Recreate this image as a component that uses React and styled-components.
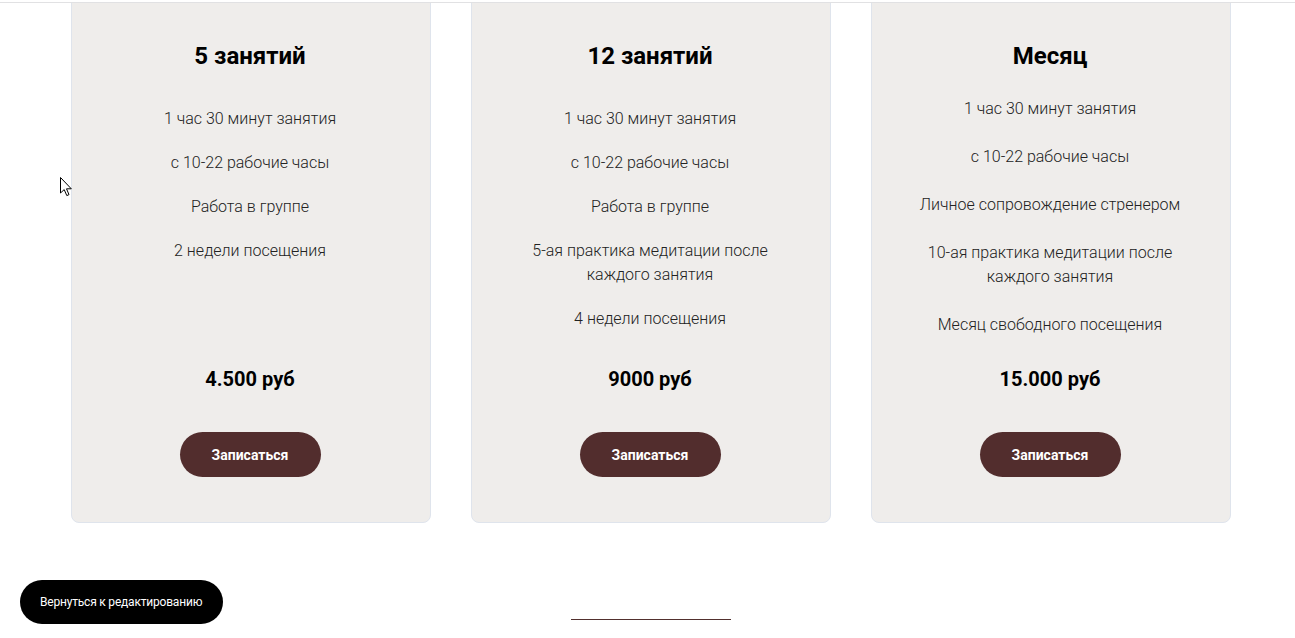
import styled, { createGlobalStyle } from 'styled-components'

const GlobalStyle = createGlobalStyle`
	html, body {
		margin: 0;
		padding: 0;
		background: #ffffff;
		overflow: hidden;
	}
	body {
		font-family: Roboto, "Noto Sans", Arial, sans-serif;
		color: #000;
	}
	* {
		box-sizing: border-box;
	}
`

const TopBar = styled.div`
	position: fixed;
	top: 0;
	left: 0;
	right: 0;
	height: 3px;
	background: #fff;
	border-bottom: 1px solid #e1e1e3;
	z-index: 5;
`

const Page = styled.div`
	padding: 0 64px 0 71px;
	display: flex;
	flex-direction: column;
	align-items: center;
`

const Cards = styled.div`
	margin-top: -20px;
	display: grid;
	grid-template-columns: repeat(3, 360px);
	gap: 40px;
`

const Card = styled.div`
	background: #efedeb;
	border: 1px solid #dfe4ec;
	border-radius: 8px;
	padding: 59px 21px 45px 19px;
	display: flex;
	flex-direction: column;
	align-items: center;
	text-align: center;
`

const Title = styled.h3`
	margin: 0;
	font-size: 24px;
	line-height: 32px;
	font-weight: 700;
	color: #000;
`

const List = styled.ul`
	list-style: none;
	margin: ${(p) => p.$top}px 0 0;
	padding: 0;
	display: flex;
	flex-direction: column;
	gap: ${(p) => p.$gap}px;
`

const Item = styled.li`
	font-size: 16px;
	line-height: 24px;
	font-weight: 300;
	color: #222;
	max-width: 280px;
	margin: 0 auto;
`

const Price = styled.div`
	margin-top: auto;
	padding-top: 29px;
	font-size: 20px;
	line-height: 26px;
	font-weight: 700;
	color: #000;
`

const SignUp = styled.button`
	margin-top: 40px;
	width: 141px;
	height: 45px;
	border: none;
	border-radius: 23px;
	background: #522d2d;
	color: #fff;
	font-family: Roboto, Arial, sans-serif;
	font-size: 14px;
	font-weight: 700;
	cursor: pointer;
`

const Divider = styled.div`
	margin-top: 96px;
	width: 160px;
	height: 1px;
	background: #52302e;
`

const BackButton = styled.button`
	position: fixed;
	left: 20px;
	bottom: 14px;
	height: 44px;
	padding: 0 21px 0 20px;
	border: none;
	border-radius: 22px;
	background: #000;
	color: #fff;
	font-family: Roboto, Arial, sans-serif;
	font-size: 12px;
	letter-spacing: -0.2px;
	cursor: pointer;
	z-index: 5;
`

const Cursor = styled.svg`
	position: fixed;
	left: 60px;
	top: 177px;
	z-index: 10;
`

const plans = [
	{
		title: '5 занятий',
		top: 35,
		gap: 20,
		items: ['1 час 30 минут занятия', 'с 10-22 рабочие часы', 'Работа в группе', '2 недели посещения'],
		price: '4.500 руб',
	},
	{
		title: '12 занятий',
		top: 35,
		gap: 20,
		items: [
			'1 час 30 минут занятия',
			'с 10-22 рабочие часы',
			'Работа в группе',
			'5-ая практика медитации после каждого занятия',
			'4 недели посещения',
		],
		price: '9000 руб',
	},
	{
		title: 'Месяц',
		top: 25,
		gap: 24,
		items: [
			'1 час 30 минут занятия',
			'с 10-22 рабочие часы',
			'Личное сопровождение стренером',
			'10-ая практика медитации после каждого занятия',
			'Месяц свободного посещения',
		],
		price: '15.000 руб',
	},
]

export default function App() {
	return (<>
		<GlobalStyle />
		<TopBar />
		<Page>
			<Cards>
				{plans.map((plan) => (
					<Card key={plan.title}>
						<Title>{plan.title}</Title>
						<List $top={plan.top} $gap={plan.gap}>
							{plan.items.map((item) => (
								<Item key={item}>{item}</Item>
							))}
						</List>
						<Price>{plan.price}</Price>
						<SignUp>Записаться</SignUp>
					</Card>
				))}
			</Cards>
			<Divider />
		</Page>
		<BackButton>Вернуться к редактированию</BackButton>
		<Cursor width="13" height="20" viewBox="0 0 13 20">
			<path d="M0.5 0.5 L0.5 16 L4.2 12.6 L6.8 18.6 L9 17.6 L6.5 11.8 L11.3 11.8 Z" fill="#fff" stroke="#000" strokeWidth="1" strokeLinejoin="miter" />
		</Cursor>
	</>)
}
